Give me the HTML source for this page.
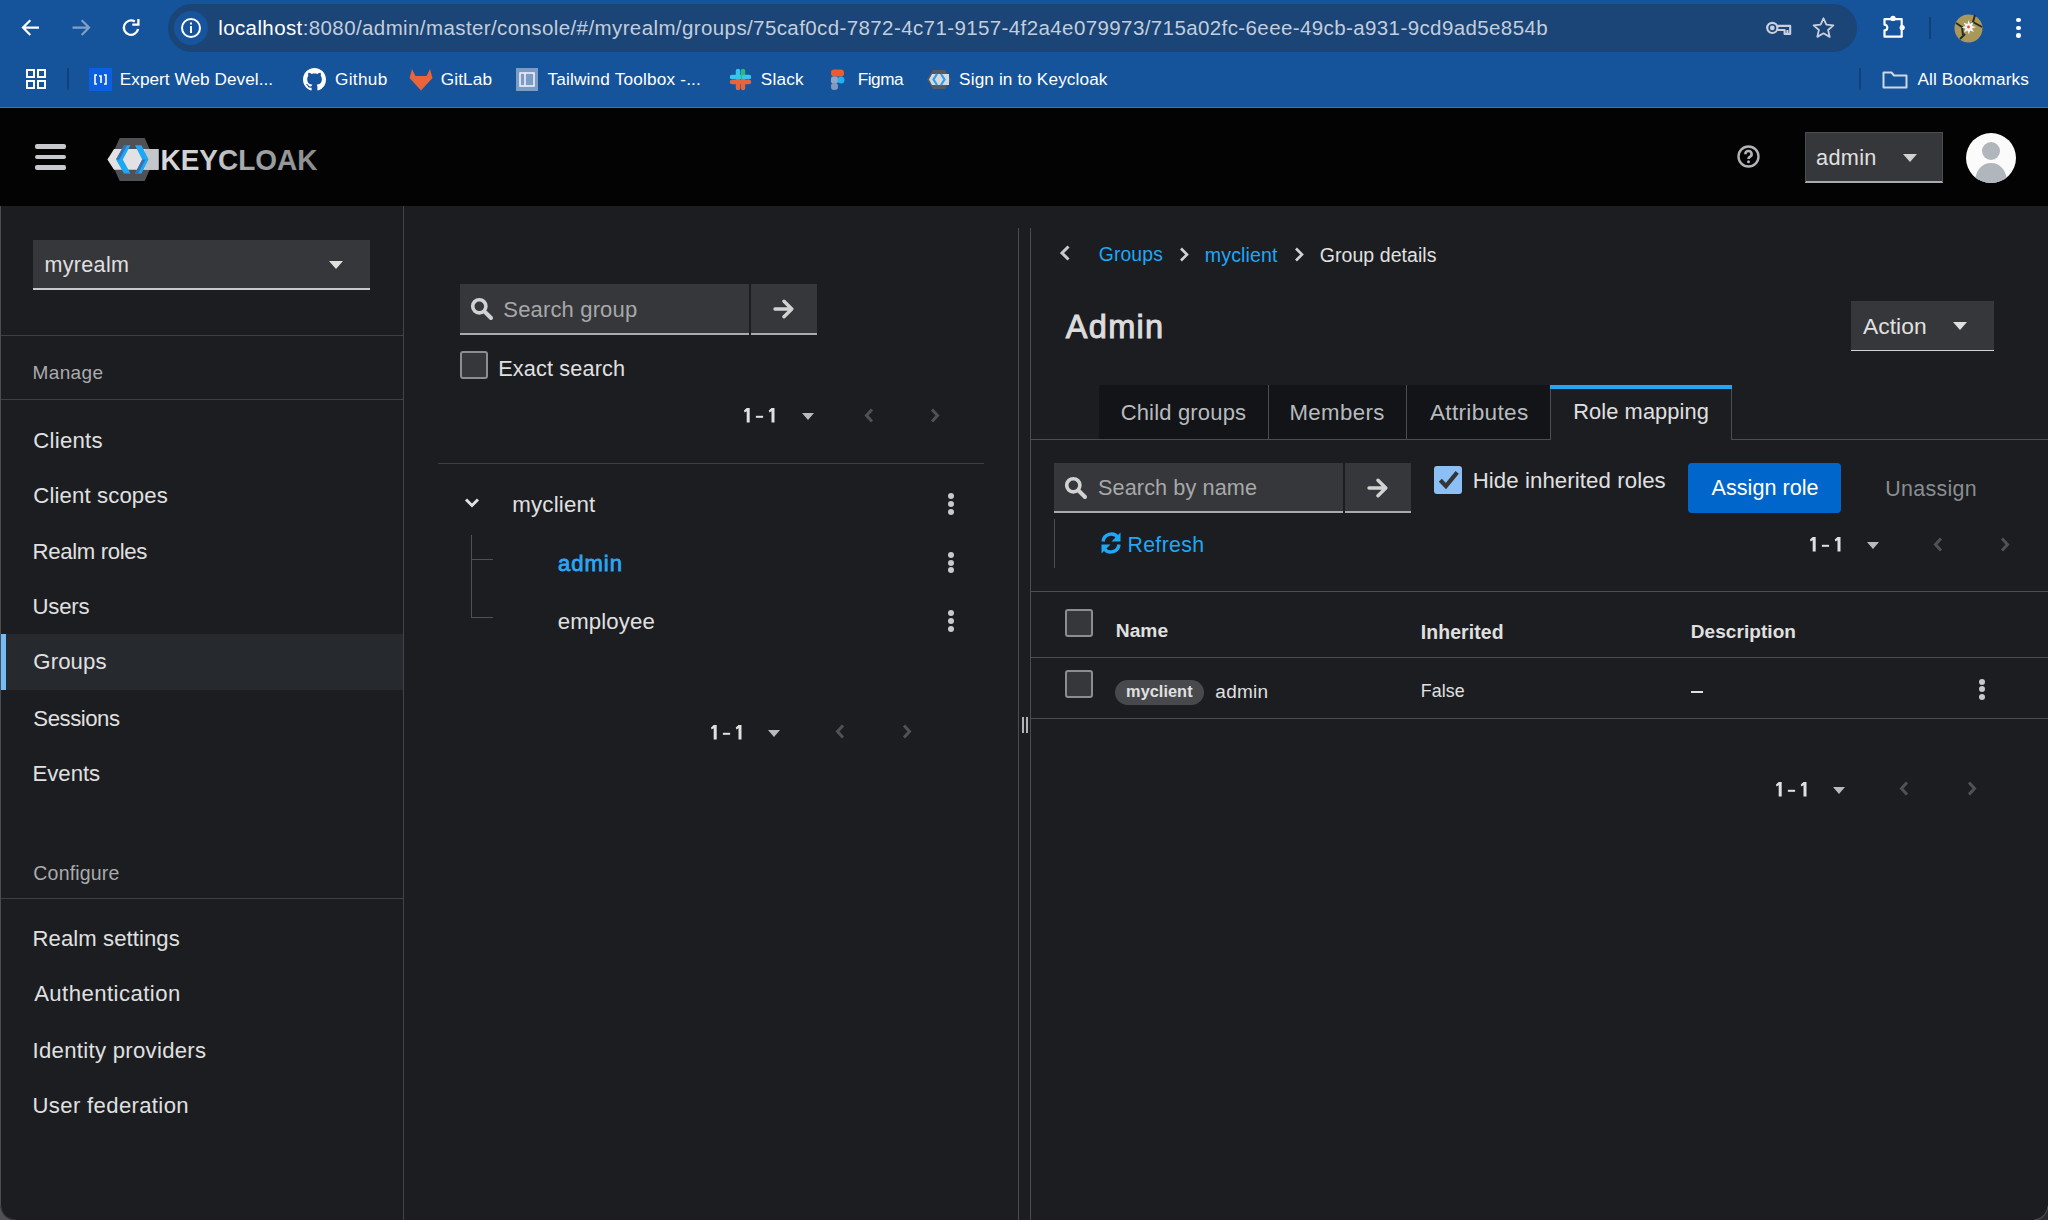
<!DOCTYPE html>
<html><head><meta charset="utf-8"><title>Keycloak</title>
<style>
html,body{margin:0;padding:0;width:2048px;height:1220px;overflow:hidden;background:#1b1d21;font-family:"Liberation Sans", sans-serif;}
.t{position:absolute;line-height:1;white-space:nowrap;}
.r{position:absolute;}
</style></head><body>
<div class="r" style="left:0px;top:0px;width:2048px;height:108px;background:#15539b;"></div>
<div class="r" style="left:0px;top:106.5px;width:2048px;height:1.5px;background:#3d76ba;"></div>
<div class="r" style="left:168px;top:4px;width:1689px;height:48px;background:#1a4576;border-radius:24px;"></div>
<div class="r" style="left:173.5px;top:10.5px;width:34px;height:34px;background:#18549d;border-radius:50%;"></div>
<svg class="r" style="left:179px;top:16px" width="24" height="24" viewBox="0 0 24 24"><circle cx="12" cy="12" r="9" fill="none" stroke="#fff" stroke-width="2"/><rect x="11" y="10" width="2" height="7" fill="#fff"/><rect x="11" y="6.5" width="2" height="2" fill="#fff"/></svg>
<svg class="r" style="left:18px;top:14px" width="26" height="26" viewBox="0 0 26 26"><path d="M21 13.6H5.5M12.3 6.2L5 13.6L12.3 21" fill="none" stroke="#fff" stroke-width="2.2"/></svg>
<svg class="r" style="left:68px;top:14px" width="26" height="26" viewBox="0 0 26 26"><path d="M4.5 13.6H20M13.7 6.2L21 13.6L13.7 21" fill="none" stroke="#83a0c4" stroke-width="2.2"/></svg>
<svg class="r" style="left:118px;top:14px" width="26" height="26" viewBox="0 0 26 26"><path d="M20.1 15A7.2 7.2 0 1 1 16.8 7.5" fill="none" stroke="#fff" stroke-width="2.3"/><path d="M14.3 10.6H20.4V4.9" fill="none" stroke="#fff" stroke-width="2.3"/></svg>
<div class="t" style="left:218.20px;top:18.44px;font-size:20.50px;color:#ffffff;letter-spacing:0.397px;">localhost<span style="color:#c3cddc">:8080/admin/master/console/#/myrealm/groups/75caf0cd-7872-4c71-9157-4f2a4e079973/715a02fc-6eee-49cb-a931-9cd9ad5e854b</span></div>
<svg class="r" style="left:1764px;top:18px" width="30" height="20" viewBox="0 0 30 20"><circle cx="8.3" cy="9.9" r="5.1" fill="none" stroke="#c9d0dc" stroke-width="2.2"/><circle cx="8.3" cy="9.9" r="2.4" fill="#c9d0dc"/><path d="M13.4 7.9H26.2V15.9H20.6V12H13.4M23.4 12V15.9" fill="none" stroke="#c9d0dc" stroke-width="2.1" stroke-linejoin="round"/></svg>
<svg class="r" style="left:1811px;top:16px" width="25" height="24" viewBox="0 0 25 24"><path d="M12.5 2.3l2.9 6.4 7 .7-5.3 4.6 1.6 6.9-6.2-3.6-6.2 3.6 1.6-6.9-5.3-4.6 7-.7z" fill="none" stroke="#c9d0dc" stroke-width="1.8" stroke-linejoin="round"/></svg>
<svg class="r" style="left:1880px;top:13px" width="28" height="28" viewBox="0 0 28 28"><path d="M4.5 6.2H21.7V23.7H4.5V17.3A2.8 2.8 0 0 0 4.5 11.7Z" fill="none" stroke="#fff" stroke-width="2.2" stroke-linejoin="round"/><circle cx="13" cy="5.4" r="2.7" fill="#fff"/><circle cx="22.2" cy="14.5" r="2.6" fill="#fff"/></svg>
<div class="r" style="left:1929px;top:17px;width:2px;height:22px;background:#12407a;"></div>
<svg class="r" style="left:1954px;top:14px" width="29" height="29" viewBox="0 0 29 29"><circle cx="14.5" cy="14.5" r="14" fill="#a8995a"/><path d="M2 9l6 4 1 8M21 1l-2 7 9 5M6 25l5-5" stroke="#2a2a2a" stroke-width="2" fill="none"/><path d="M14.5 6l1.5 4 3.5-2-1.5 4 4 1-4 1.5 2 3.5-4-1.5-1 4-1.5-4-3.5 2 1.5-4-4-1 4-1.5-2-3.5 4 1.5z" fill="#f4f4f4"/><circle cx="14.5" cy="13" r="1.4" fill="#e05030"/></svg>
<div class="r" style="left:2016.4px;top:17.7px;width:4.6px;height:4.6px;background:#fff;border-radius:50%;"></div>
<div class="r" style="left:2016.4px;top:25.5px;width:4.6px;height:4.6px;background:#fff;border-radius:50%;"></div>
<div class="r" style="left:2016.4px;top:33.300000000000004px;width:4.6px;height:4.6px;background:#fff;border-radius:50%;"></div>
<svg class="r" style="left:25px;top:68px" width="22" height="22" viewBox="0 0 22 22"><g fill="none" stroke="#fff" stroke-width="2"><rect x="2" y="2" width="7" height="7"/><rect x="13" y="2" width="7" height="7"/><rect x="2" y="13" width="7" height="7"/><rect x="13" y="13" width="7" height="7"/></g></svg>
<div class="r" style="left:67px;top:68px;width:2px;height:22px;background:#12407a;"></div>
<div class="r" style="left:89px;top:68px;width:23px;height:23px;background:#0b5fe0;"></div>
<svg class="r" style="left:89px;top:68px" width="23" height="23" viewBox="0 0 23 23"><path d="M8 7H6v9h2M15 7h2v9h-2M10 8h2v7" fill="none" stroke="#fff" stroke-width="1.6"/></svg>
<div class="t" style="left:119.76px;top:70.93px;font-size:17.20px;color:#ffffff;letter-spacing:0.044px;">Expert Web Devel...</div>
<svg class="r" style="left:303px;top:68px" width="23" height="23" viewBox="0 0 16 16"><path fill="#fff" d="M8 0C3.58 0 0 3.58 0 8c0 3.540 2.29 6.53 5.47 7.59.4.07.55-.17.55-.38 0-.19-.01-.82-.01-1.490-2.01.37-2.53-.49-2.69-.94-.09-.23-.48-.94-.82-1.13-.28-.15-.68-.52-.01-.53.63-.01 1.08.58 1.23.82.72 1.21 1.87.87 2.33.66.07-.52.28-.87.51-1.07-1.78-.2-3.64-.89-3.64-3.95 0-.87.31-1.59.82-2.15-.08-.2-.36-1.02.08-2.12 0 0 .67-.21 2.2.82.64-.18 1.32-.27 2-.27.68 0 1.36.09 2 .27 1.53-1.04 2.2-.82 2.2-.82.44 1.1.16 1.92.08 2.12.51.56.82 1.27.82 2.15 0 3.07-1.87 3.75-3.65 3.95.29.25.54.73.54 1.48 0 1.07-.01 1.93-.01 2.2 0 .21.15.46.55.38A8.013 8.013 0 0016 8c0-4.42-3.58-8-8-8z"/></svg>
<div class="t" style="left:335.00px;top:70.93px;font-size:17.20px;color:#ffffff;letter-spacing:0.320px;">Github</div>
<svg class="r" style="left:409px;top:68px" width="24" height="23" viewBox="0 0 24 23"><path d="M3 1l3.5 7h11L21 1l2.5 9L12 22.5 0.5 10z" fill="#e8643a"/></svg>
<div class="t" style="left:440.84px;top:70.51px;font-size:17.20px;color:#ffffff;letter-spacing:0.096px;">GitLab</div>
<div class="r" style="left:516px;top:68px;width:22px;height:23px;background:#7d9cc4;"></div>
<svg class="r" style="left:516px;top:68px" width="22" height="23" viewBox="0 0 22 23"><rect x="4" y="5" width="14" height="13" fill="none" stroke="#eef" stroke-width="1.6"/><path d="M9 5v13" stroke="#eef" stroke-width="1.6"/></svg>
<div class="t" style="left:547.44px;top:70.93px;font-size:17.20px;color:#ffffff;letter-spacing:0.188px;">Tailwind Toolbox -...</div>
<svg class="r" style="left:729px;top:68px" width="23" height="23" viewBox="0 0 23 23"><g stroke-linecap="round" stroke-width="4.5"><path d="M9 3v8" stroke="#36c5f0"/><path d="M3 9h8" stroke="#36c5f0"/><path d="M14 3v8" stroke="#2eb67d"/><path d="M20 9h-5" stroke="#36c5f0"/><path d="M9 20v-7" stroke="#e8643a"/><path d="M3 14h8" stroke="#e8643a"/><path d="M14 20v-7" stroke="#e8643a"/><path d="M20 14h-6" stroke="#e8643a"/></g></svg>
<div class="t" style="left:760.84px;top:70.93px;font-size:17.20px;color:#ffffff;letter-spacing:0.200px;">Slack</div>
<svg class="r" style="left:830px;top:68px" width="16" height="23" viewBox="0 0 16 23"><rect x="1" y="1.5" width="13" height="7" rx="3.2" fill="#ee5a2c"/><rect x="1" y="8.5" width="7" height="7" rx="2" fill="#8ea6c8"/><circle cx="11" cy="12" r="3.5" fill="#20b0f4"/><rect x="1" y="15" width="7" height="7" rx="3" fill="#7f9ac0"/></svg>
<div class="t" style="left:857.72px;top:70.93px;font-size:17.20px;color:#ffffff;letter-spacing:-0.460px;">Figma</div>
<svg class="r" style="left:927px;top:69px" width="24" height="21" viewBox="0 0 24 21"><path d="M6 1h12l6 9.5-6 9.5H6L0 10.5z" fill="#555b63"/><path d="M2 10.5L5 5h17v11H5z" fill="#d7d9dc"/><path d="M10 5l-3.5 5.5L10 16M14 5l3.5 5.5L14 16" fill="none" stroke="#2a9df4" stroke-width="2.2"/></svg>
<div class="t" style="left:959.12px;top:70.93px;font-size:17.20px;color:#ffffff;letter-spacing:0.120px;">Sign in to Keycloak</div>
<div class="r" style="left:1859px;top:68px;width:2px;height:22px;background:#12407a;"></div>
<svg class="r" style="left:1882px;top:70px" width="26" height="19" viewBox="0 0 26 19"><path d="M1.5 2.5h8l2.5 3h12.5v12h-23z" fill="none" stroke="#d0d8e4" stroke-width="2" stroke-linejoin="round"/></svg>
<div class="t" style="left:1917.40px;top:70.51px;font-size:17.20px;color:#ffffff;letter-spacing:0.133px;">All Bookmarks</div>
<div class="r" style="left:0px;top:108px;width:2048px;height:98px;background:#030303;"></div>
<div class="r" style="left:35px;top:144px;width:31px;height:4.5px;background:#c7c9cc;border-radius:2px;"></div>
<div class="r" style="left:35px;top:154.5px;width:31px;height:4.5px;background:#c7c9cc;border-radius:2px;"></div>
<div class="r" style="left:35px;top:165px;width:31px;height:4.5px;background:#c7c9cc;border-radius:2px;"></div>
<svg class="r" style="left:100px;top:130px" width="62" height="56" viewBox="100 130 62 56">
<path d="M119.7 137.9H144.7L154.3 159.4L144.7 180.9H119.7L110 159.4z" fill="#505154"/>
<path d="M107.4 159.4L114 149H158.5V169.8H114z" fill="#e2e2e4"/>
<path d="M145 149H158.5V169.8H145z" fill="#c4c6ca"/>
<path d="M124 145.2H130.5L122.8 159.4L130.5 173.5H124L116 159.4z" fill="#1ea7f5"/>
<path d="M124 145.2H127.2L119.3 159.4H116z" fill="#3a6fb0"/>
<path d="M135 145.2H141.5L148.5 159.4L141.5 173.5H135L142.2 159.4z" fill="#1ea7f5"/>
<path d="M142.2 159.4H145.4L138.2 173.5H135z" fill="#3a6fb0"/>
</svg>
<svg class="r" style="left:158px;top:140px" width="165" height="36" viewBox="0 0 165 36"><defs><linearGradient id="kg" x1="0" x2="1" y1="0" y2="0"><stop offset="0" stop-color="#d8d9da"/><stop offset="0.35" stop-color="#c9cacc"/><stop offset="0.55" stop-color="#a2a4a6"/><stop offset="1" stop-color="#8a8c8e"/></linearGradient></defs><text x="2.5" y="29.7" font-family="Liberation Sans" font-weight="700" font-size="30" fill="url(#kg)" textLength="157" lengthAdjust="spacingAndGlyphs">KEYCLOAK</text></svg>
<svg class="r" style="left:1737px;top:145px" width="23" height="23" viewBox="0 0 23 23"><circle cx="11.5" cy="11.5" r="10" fill="none" stroke="#b1b3b6" stroke-width="2.4"/><path d="M8.4 9.2a3.1 3.1 0 1 1 4.5 2.7c-.9.5-1.4 1-1.4 2" fill="none" stroke="#b1b3b6" stroke-width="2.6"/><circle cx="11.5" cy="16.8" r="1.5" fill="#b1b3b6"/></svg>
<div class="r" style="left:1805px;top:132px;width:138px;height:51px;background:#36373a;box-sizing:border-box;border:1px solid #4a4c50;border-bottom:2px solid #a9abae;"></div>
<div class="t" style="left:1816.00px;top:146.97px;font-size:21.70px;color:#e0e0e0;letter-spacing:0.340px;">admin</div>
<svg class="r" style="left:1903px;top:154px" width="14" height="8" viewBox="0 0 14 8"><path d="M0 0h14L7 8z" fill="#d2d2d2"/></svg>
<svg class="r" style="left:1966px;top:133px" width="50" height="50" viewBox="0 0 50 50"><defs><clipPath id="ac"><circle cx="25" cy="25" r="25"/></clipPath></defs><circle cx="25" cy="25" r="25" fill="#fbfbfc"/><g clip-path="url(#ac)" fill="#b1b5bc"><circle cx="25" cy="18" r="9"/><path d="M9 50c0-13 7-20 16-20s16 7 16 20z"/></g></svg>
<div class="r" style="left:0px;top:206px;width:403px;height:1014px;background:#1b1d21;"></div>
<div class="r" style="left:403px;top:206px;width:1px;height:1014px;background:#424448;"></div>
<div class="r" style="left:0px;top:206px;width:1.3px;height:1014px;background:#4a4c50;"></div>
<div class="r" style="left:33px;top:240px;width:337px;height:50px;background:#36373a;box-sizing:border-box;border-bottom:2px solid #c7c9cb;"></div>
<div class="t" style="left:44.52px;top:255.33px;font-size:21.50px;color:#e0e0e0;letter-spacing:0.333px;">myrealm</div>
<svg class="r" style="left:329px;top:261px" width="14" height="8" viewBox="0 0 14 8"><path d="M0 0h14L7 8z" fill="#e0e0e0"/></svg>
<div class="r" style="left:1px;top:335px;width:402px;height:1px;background:#3c3f43;"></div>
<div class="t" style="left:32.56px;top:363.15px;font-size:19.00px;color:#aaabac;letter-spacing:0.368px;">Manage</div>
<div class="r" style="left:1px;top:399px;width:402px;height:1px;background:#3c3f43;"></div>
<div class="t" style="left:33.36px;top:429.95px;font-size:22.20px;color:#e0e0e0;letter-spacing:0.227px;">Clients</div>
<div class="t" style="left:33.36px;top:484.76px;font-size:22.20px;color:#e0e0e0;letter-spacing:0.107px;">Client scopes</div>
<div class="t" style="left:32.56px;top:540.55px;font-size:22.20px;color:#e0e0e0;letter-spacing:-0.352px;">Realm roles</div>
<div class="t" style="left:32.56px;top:595.64px;font-size:22.20px;color:#e0e0e0;letter-spacing:-0.240px;">Users</div>
<div class="r" style="left:1px;top:634px;width:402px;height:56px;background:#26292d;"></div>
<div class="r" style="left:1px;top:634px;width:5px;height:56px;background:#73bcf7;"></div>
<div class="t" style="left:33.36px;top:651.08px;font-size:22.20px;color:#e0e0e0;letter-spacing:0.080px;">Groups</div>
<div class="t" style="left:33.36px;top:707.64px;font-size:22.20px;color:#e0e0e0;letter-spacing:-0.480px;">Sessions</div>
<div class="t" style="left:32.56px;top:762.59px;font-size:22.20px;color:#e0e0e0;letter-spacing:-0.048px;">Events</div>
<div class="t" style="left:33.36px;top:863.89px;font-size:19.50px;color:#aaabac;letter-spacing:0.180px;">Configure</div>
<div class="r" style="left:1px;top:898px;width:402px;height:1px;background:#3c3f43;"></div>
<div class="t" style="left:32.56px;top:928.05px;font-size:22.10px;color:#e0e0e0;letter-spacing:0.080px;">Realm settings</div>
<div class="t" style="left:34.16px;top:983.35px;font-size:22.10px;color:#e0e0e0;letter-spacing:0.462px;">Authentication</div>
<div class="t" style="left:32.56px;top:1039.84px;font-size:22.10px;color:#e0e0e0;letter-spacing:0.311px;">Identity providers</div>
<div class="t" style="left:32.56px;top:1094.79px;font-size:22.10px;color:#e0e0e0;letter-spacing:0.354px;">User federation</div>
<div class="r" style="left:460px;top:284px;width:289px;height:51px;background:#36373a;box-sizing:border-box;border-bottom:2px solid #a9abae;"></div>
<div class="r" style="left:751px;top:284px;width:66px;height:51px;background:#36373a;box-sizing:border-box;border-bottom:2px solid #a9abae;"></div>
<svg class="r" style="left:470px;top:297px" width="24" height="24" viewBox="0 0 24 24"><circle cx="9.3" cy="9.3" r="6.6" fill="none" stroke="#d2d2d2" stroke-width="3.6"/><path d="M14.5 14.5L21 21" stroke="#d2d2d2" stroke-width="4" stroke-linecap="round"/></svg>
<div class="t" style="left:503.30px;top:299.37px;font-size:22.00px;color:#a7a8aa;letter-spacing:0.160px;">Search group</div>
<svg class="r" style="left:773px;top:299px" width="22" height="20" viewBox="0 0 22 20"><path d="M2 10H18.5M11 2.2l7.8 7.8-7.8 7.8" fill="none" stroke="#d2d2d2" stroke-width="3.4" stroke-linecap="round" stroke-linejoin="round"/></svg>
<div class="r" style="left:460px;top:351px;width:27.5px;height:28px;background:#36373a;box-sizing:border-box;border:2px solid #8c8d8f;border-radius:3px;"></div>
<div class="t" style="left:498.22px;top:357.77px;font-size:21.70px;color:#e0e0e0;letter-spacing:0.145px;">Exact search</div>
<svg class="r" style="left:743px;top:408.1px" width="34" height="16" viewBox="-1 0 34 16"><g fill="#e0e0e0"><path d="M2.7 0H5.7V14.5H2.7V3.3L0.5 4.4L0 2.4z"/><rect x="11.9" y="7.8" width="7.2" height="2"/><path d="M27.5 0H30.5V14.5H27.5V3.3L25.3 4.4L24.8 2.4z"/></g></svg>
<svg class="r" style="left:801.6px;top:413.0px" width="12" height="7" viewBox="0 0 12 7"><path d="M0 0h12L6 7z" fill="#b8bbbe"/></svg>
<svg class="r" style="left:864px;top:407.6px" width="10" height="15" viewBox="0 0 10 15"><path d="M8 1.5L2.5 7.5 8 13.5" fill="none" stroke="#4f5255" stroke-width="3"/></svg>
<svg class="r" style="left:930px;top:407.6px" width="10" height="15" viewBox="0 0 10 15"><path d="M2 1.5L7.5 7.5 2 13.5" fill="none" stroke="#4f5255" stroke-width="3"/></svg>
<div class="r" style="left:438px;top:463px;width:546px;height:1px;background:#3c3f43;"></div>
<svg class="r" style="left:464px;top:497px" width="16" height="12" viewBox="0 0 16 12"><path d="M2 2.5l6 6 6-6" fill="none" stroke="#e0e0e0" stroke-width="3"/></svg>
<div class="t" style="left:512.30px;top:493.63px;font-size:22.30px;color:#e0e0e0;letter-spacing:0.171px;">myclient</div>
<div class="t" style="left:558.00px;top:552.88px;font-size:22.00px;color:#2ba6f5;letter-spacing:1.000px;-webkit-text-stroke:0.8px #2ba6f5;">admin</div>
<div class="t" style="left:557.68px;top:610.70px;font-size:22.20px;color:#e0e0e0;letter-spacing:0.126px;">employee</div>
<div class="r" style="left:471px;top:535px;width:1px;height:83px;background:#4f5255;"></div>
<div class="r" style="left:471px;top:559px;width:22px;height:1px;background:#4f5255;"></div>
<div class="r" style="left:471px;top:617px;width:22px;height:1px;background:#4f5255;"></div>
<div class="r" style="left:947.5px;top:493.4px;width:6px;height:6px;background:#c7c9cc;border-radius:50%;"></div>
<div class="r" style="left:947.5px;top:501px;width:6px;height:6px;background:#c7c9cc;border-radius:50%;"></div>
<div class="r" style="left:947.5px;top:508.6px;width:6px;height:6px;background:#c7c9cc;border-radius:50%;"></div>
<div class="r" style="left:947.5px;top:551.9px;width:6px;height:6px;background:#c7c9cc;border-radius:50%;"></div>
<div class="r" style="left:947.5px;top:559.5px;width:6px;height:6px;background:#c7c9cc;border-radius:50%;"></div>
<div class="r" style="left:947.5px;top:567.1px;width:6px;height:6px;background:#c7c9cc;border-radius:50%;"></div>
<div class="r" style="left:947.5px;top:610.4px;width:6px;height:6px;background:#c7c9cc;border-radius:50%;"></div>
<div class="r" style="left:947.5px;top:618px;width:6px;height:6px;background:#c7c9cc;border-radius:50%;"></div>
<div class="r" style="left:947.5px;top:625.6px;width:6px;height:6px;background:#c7c9cc;border-radius:50%;"></div>
<svg class="r" style="left:709.8px;top:724.7px" width="34" height="16" viewBox="-1 0 34 16"><g fill="#e0e0e0"><path d="M2.7 0H5.7V14.5H2.7V3.3L0.5 4.4L0 2.4z"/><rect x="11.9" y="7.8" width="7.2" height="2"/><path d="M27.5 0H30.5V14.5H27.5V3.3L25.3 4.4L24.8 2.4z"/></g></svg>
<svg class="r" style="left:768px;top:729.6px" width="12" height="7" viewBox="0 0 12 7"><path d="M0 0h12L6 7z" fill="#b8bbbe"/></svg>
<svg class="r" style="left:835px;top:724.2px" width="10" height="15" viewBox="0 0 10 15"><path d="M8 1.5L2.5 7.5 8 13.5" fill="none" stroke="#4f5255" stroke-width="3"/></svg>
<svg class="r" style="left:902px;top:724.2px" width="10" height="15" viewBox="0 0 10 15"><path d="M2 1.5L7.5 7.5 2 13.5" fill="none" stroke="#4f5255" stroke-width="3"/></svg>
<div class="r" style="left:1018px;top:228px;width:1px;height:992px;background:#4a4c50;"></div>
<div class="r" style="left:1030px;top:228px;width:1px;height:992px;background:#4a4c50;"></div>
<div class="r" style="left:1022.3px;top:717px;width:1.3px;height:16px;background:#b0b2b5;"></div>
<div class="r" style="left:1026.3px;top:717px;width:1.3px;height:16px;background:#b0b2b5;"></div>
<svg class="r" style="left:1059px;top:245px" width="12" height="16" viewBox="0 0 12 16"><path d="M9.5 1.5L3 8l6.5 6.5" fill="none" stroke="#c7c9cc" stroke-width="3"/></svg>
<div class="t" style="left:1098.76px;top:245.05px;font-size:19.30px;color:#1fa7f8;letter-spacing:0.160px;">Groups</div>
<svg class="r" style="left:1178.5px;top:247px" width="10" height="15" viewBox="0 0 10 15"><path d="M2 1.5L8 7.5 2 13.5" fill="none" stroke="#d2d2d2" stroke-width="2.6"/></svg>
<div class="t" style="left:1204.76px;top:246.20px;font-size:19.60px;color:#1fa7f8;letter-spacing:0.137px;">myclient</div>
<svg class="r" style="left:1293.5px;top:247px" width="10" height="15" viewBox="0 0 10 15"><path d="M2 1.5L8 7.5 2 13.5" fill="none" stroke="#d2d2d2" stroke-width="2.6"/></svg>
<div class="t" style="left:1319.68px;top:246.28px;font-size:19.50px;color:#e0e0e0;letter-spacing:0.073px;">Group details</div>
<div class="t" style="left:1065.80px;top:311.33px;font-size:32.50px;color:#dcdcdd;letter-spacing:1.320px;-webkit-text-stroke:1px #dcdcdd;">Admin</div>
<div class="r" style="left:1851px;top:301px;width:143px;height:50px;background:#36373a;box-sizing:border-box;border-bottom:1.5px solid #d2d2d2;"></div>
<div class="t" style="left:1862.90px;top:314.58px;font-size:22.80px;color:#e0e0e0;letter-spacing:0.080px;">Action</div>
<svg class="r" style="left:1953px;top:322px" width="14" height="8" viewBox="0 0 14 8"><path d="M0 0h14L7 8z" fill="#e0e0e0"/></svg>
<div class="r" style="left:1031px;top:439px;width:1017px;height:1px;background:#4b4d51;"></div>
<div class="r" style="left:1099px;top:385px;width:451px;height:54px;background:#131417;"></div>
<div class="r" style="left:1268px;top:385px;width:1px;height:54px;background:#4b4d51;"></div>
<div class="r" style="left:1406px;top:385px;width:1px;height:54px;background:#4b4d51;"></div>
<div class="r" style="left:1550px;top:385px;width:182px;height:55px;background:#1b1d21;box-sizing:border-box;border-left:1px solid #4b4d51;border-right:1px solid #4b4d51;"></div>
<div class="r" style="left:1550px;top:385px;width:182px;height:4px;background:#1fa7f8;"></div>
<div class="t" style="left:1120.64px;top:402.02px;font-size:22.00px;color:#b8bbbe;letter-spacing:0.175px;">Child groups</div>
<div class="t" style="left:1289.48px;top:401.85px;font-size:22.20px;color:#b8bbbe;letter-spacing:0.413px;">Members</div>
<div class="t" style="left:1429.90px;top:401.51px;font-size:22.60px;color:#b8bbbe;letter-spacing:0.329px;">Attributes</div>
<div class="t" style="left:1573.20px;top:401.49px;font-size:21.80px;color:#e0e0e0;letter-spacing:0.109px;">Role mapping</div>
<div class="r" style="left:1054px;top:463px;width:289px;height:50px;background:#36373a;box-sizing:border-box;border-bottom:2px solid #a9abae;"></div>
<div class="r" style="left:1345px;top:463px;width:66px;height:50px;background:#36373a;box-sizing:border-box;border-bottom:2px solid #a9abae;"></div>
<svg class="r" style="left:1064px;top:476px" width="24" height="24" viewBox="0 0 24 24"><circle cx="9.3" cy="9.3" r="6.6" fill="none" stroke="#d2d2d2" stroke-width="3.6"/><path d="M14.5 14.5L21 21" stroke="#d2d2d2" stroke-width="4" stroke-linecap="round"/></svg>
<div class="t" style="left:1098.02px;top:477.42px;font-size:21.70px;color:#a7a8aa;letter-spacing:0.086px;">Search by name</div>
<svg class="r" style="left:1367px;top:478px" width="22" height="20" viewBox="0 0 22 20"><path d="M2 10H18.5M11 2.2l7.8 7.8-7.8 7.8" fill="none" stroke="#d2d2d2" stroke-width="3.4" stroke-linecap="round" stroke-linejoin="round"/></svg>
<div class="r" style="left:1434px;top:465.5px;width:28px;height:28.3px;background:#8cc0f5;border-radius:3px;"></div>
<svg class="r" style="left:1433.5px;top:465px" width="28.5" height="28.5" viewBox="0 0 28.5 28.5"><path d="M6.3 15.3L11.9 21 23.2 7.3" fill="none" stroke="#343538" stroke-width="4.2"/></svg>
<div class="t" style="left:1472.64px;top:469.66px;font-size:22.20px;color:#e0e0e0;letter-spacing:0.101px;">Hide inherited roles</div>
<div class="r" style="left:1688px;top:463px;width:153px;height:50px;background:#0066cc;border-radius:4px;"></div>
<div class="t" style="left:1711.56px;top:477.02px;font-size:21.60px;color:#ffffff;letter-spacing:0.024px;">Assign role</div>
<div class="t" style="left:1885.14px;top:478.79px;font-size:21.40px;color:#8a8d90;letter-spacing:0.343px;">Unassign</div>
<div class="r" style="left:1054px;top:519px;width:1px;height:49px;background:#4b4d51;"></div>
<svg class="r" style="left:1099px;top:531px" width="24" height="24" viewBox="0 0 24 24"><path d="M4 10.5A8.3 8.3 0 0 1 19 6.5" fill="none" stroke="#1fa7f8" stroke-width="3.4"/><path d="M21.5 1.5v9h-9z" fill="#1fa7f8"/><path d="M20 13.5A8.3 8.3 0 0 1 5 17.5" fill="none" stroke="#1fa7f8" stroke-width="3.4"/><path d="M2.5 22.5v-9h9z" fill="#1fa7f8"/></svg>
<div class="t" style="left:1127.46px;top:534.72px;font-size:21.30px;color:#1fa7f8;letter-spacing:0.347px;">Refresh</div>
<svg class="r" style="left:1808.8px;top:537.0px" width="34" height="16" viewBox="-1 0 34 16"><g fill="#e0e0e0"><path d="M2.7 0H5.7V14.5H2.7V3.3L0.5 4.4L0 2.4z"/><rect x="11.9" y="7.8" width="7.2" height="2"/><path d="M27.5 0H30.5V14.5H27.5V3.3L25.3 4.4L24.8 2.4z"/></g></svg>
<svg class="r" style="left:1866.5px;top:541.9px" width="12" height="7" viewBox="0 0 12 7"><path d="M0 0h12L6 7z" fill="#b8bbbe"/></svg>
<svg class="r" style="left:1933px;top:536.5px" width="10" height="15" viewBox="0 0 10 15"><path d="M8 1.5L2.5 7.5 8 13.5" fill="none" stroke="#4f5255" stroke-width="3"/></svg>
<svg class="r" style="left:2000px;top:536.5px" width="10" height="15" viewBox="0 0 10 15"><path d="M2 1.5L7.5 7.5 2 13.5" fill="none" stroke="#4f5255" stroke-width="3"/></svg>
<div class="r" style="left:1031px;top:591px;width:1017px;height:1px;background:#4b4d51;"></div>
<div class="r" style="left:1065px;top:609px;width:28px;height:28px;background:#36373a;box-sizing:border-box;border:2px solid #8c8d8f;border-radius:3px;"></div>
<div class="t" style="left:1115.84px;top:621.01px;font-size:19.20px;color:#e0e0e0;font-weight:700;">Name</div>
<div class="t" style="left:1420.76px;top:622.94px;font-size:19.40px;color:#e0e0e0;font-weight:700;letter-spacing:0.120px;">Inherited</div>
<div class="t" style="left:1690.76px;top:621.60px;font-size:19.00px;color:#e0e0e0;font-weight:700;letter-spacing:0.064px;">Description</div>
<div class="r" style="left:1031px;top:657px;width:1017px;height:1px;background:#4b4d51;"></div>
<div class="r" style="left:1065px;top:670px;width:28px;height:28px;background:#36373a;box-sizing:border-box;border:2px solid #8c8d8f;border-radius:3px;"></div>
<div class="r" style="left:1115px;top:680px;width:89px;height:25px;background:#47494c;border-radius:13px;"></div>
<div class="t" style="left:1126.10px;top:683.30px;font-size:16.30px;color:#e0e0e0;font-weight:700;letter-spacing:0.057px;">myclient</div>
<div class="t" style="left:1215.36px;top:681.53px;font-size:19.00px;color:#e0e0e0;letter-spacing:0.260px;">admin</div>
<div class="t" style="left:1420.76px;top:683.03px;font-size:17.80px;color:#e0e0e0;letter-spacing:0.100px;">False</div>
<div class="r" style="left:1691px;top:691px;width:12px;height:1.6px;background:#e0e0e0;"></div>
<div class="r" style="left:1979px;top:678.8px;width:6px;height:6px;background:#c7c9cc;border-radius:50%;"></div>
<div class="r" style="left:1979px;top:686.4px;width:6px;height:6px;background:#c7c9cc;border-radius:50%;"></div>
<div class="r" style="left:1979px;top:694.0px;width:6px;height:6px;background:#c7c9cc;border-radius:50%;"></div>
<div class="r" style="left:1031px;top:718px;width:1017px;height:1px;background:#4b4d51;"></div>
<svg class="r" style="left:1775px;top:781.8px" width="34" height="16" viewBox="-1 0 34 16"><g fill="#e0e0e0"><path d="M2.7 0H5.7V14.5H2.7V3.3L0.5 4.4L0 2.4z"/><rect x="11.9" y="7.8" width="7.2" height="2"/><path d="M27.5 0H30.5V14.5H27.5V3.3L25.3 4.4L24.8 2.4z"/></g></svg>
<svg class="r" style="left:1833px;top:786.6999999999999px" width="12" height="7" viewBox="0 0 12 7"><path d="M0 0h12L6 7z" fill="#b8bbbe"/></svg>
<svg class="r" style="left:1899px;top:781.3px" width="10" height="15" viewBox="0 0 10 15"><path d="M8 1.5L2.5 7.5 8 13.5" fill="none" stroke="#4f5255" stroke-width="3"/></svg>
<svg class="r" style="left:1966.5px;top:781.3px" width="10" height="15" viewBox="0 0 10 15"><path d="M2 1.5L7.5 7.5 2 13.5" fill="none" stroke="#4f5255" stroke-width="3"/></svg>
<svg class="r" style="left:0px;top:1206px" width="16" height="14" viewBox="0 0 16 14"><path d="M0 0V14H16C8 14 1.5 9 0.7 0z" fill="#505256"/><path d="M0.7 0C1.5 9 8 14 16 14" fill="none" stroke="#3a3c40" stroke-width="1.2"/></svg>
<svg class="r" style="left:2034px;top:1206px" width="14" height="14" viewBox="0 0 14 14"><path d="M14 0V14H0C7 14 13.3 8 14 0z" fill="#2a2b2e"/><path d="M14 0C13.3 8 7 14 0 14" fill="none" stroke="#4a4c50" stroke-width="1.2"/></svg>
</body></html>
